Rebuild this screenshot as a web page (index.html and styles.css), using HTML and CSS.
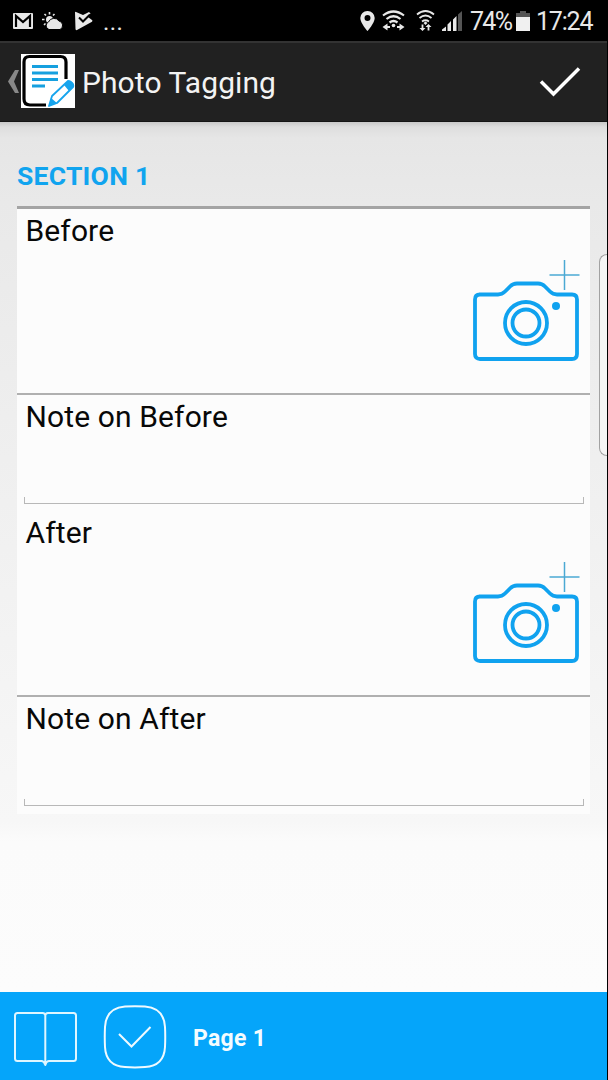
FILE: index.html
```html
<!DOCTYPE html>
<html lang="en">
<head>
<meta charset="utf-8">
<title>Photo Tagging</title>
<link rel="stylesheet" href="styles.css">
</head>
<body>
<div class="screen">
  <div class="status">
    <svg class="status-left" viewBox="0 0 110 41" width="110" height="41">
      <path fill="#e8e8e8" d="M14 13h18q1 0 1 1v14q0 1-1 1H14q-1 0-1-1V14q0-1 1-1z"/>
      <path fill="none" stroke="#000" stroke-width="2.2" d="M16 27V16l7 6 7-6v11"/>
      <g stroke="#e8e8e8" stroke-width="1.6"><path d="M49.500 12v2.500M44.500 14l1.500 1.500M54.500 14l-1.500 1.500M42 19.500h2.500M44 25l1.500-1.500"/></g>
      <circle cx="49.500" cy="19.500" r="3.500" fill="#e8e8e8"/>
      <path fill="#e8e8e8" stroke="#000" stroke-width="1" d="M49 29.500a4 4 0 0 1-.5-7.500 6 6 0 0 1 10.500-1 4.500 4.500 0 0 1 1 8.500z"/>
      <path fill="#e8e8e8" d="M75 12.500q0-1 1-.6L83 15l6-3 1.500 1.500-2.500 3.500 4 3q1 .8 0 1.700L77 30q-1.500.5-1.500-1z"/>
      <path fill="none" stroke="#000" stroke-width="2" d="M79 17.500l4 4 7-7"/>
    </svg>
    <span class="dots">...</span>
    <svg class="status-right" viewBox="358 0 106 41" width="106" height="41">
      <path fill="#e8e8e8" fill-rule="evenodd" d="M367.500 11a7 7 0 0 1 7.200 7c0 5-7.200 13-7.200 13s-7.200-8-7.200-13a7 7 0 0 1 7.200-7zm0 4a3 3 0 1 0 0 6 3 3 0 0 0 0-6z"/>
      <g fill="none" stroke="#e8e8e8" stroke-width="2.200">
        <path d="M383 15.500q10.500-8 21 0M386.500 19q7-5.500 14 0M389.500 22.500q4-3 8 0"/>
        <path d="M384 27h6M397 27h6"/>
        <path d="M417 14.500q8.500-7 17 0M419.500 18q6-5 12 0M422 21.500q3.500-2.500 7 0" stroke-width="1.800"/>
        <path d="M422.500 24.500v5M428.500 25.500v5" stroke-width="1.800"/>
      </g>
      <g fill="#e8e8e8"><path d="M387.500 23.500v7l-5-3.500zM399.500 23.500v7l5-3.500z" transform="translate(0 0)"/><circle cx="393.500" cy="25.500" r="1.800"/><path d="M419.500 28h6l-3 3zM425.500 27h6l-3-3zM423.500 23l2-1.500 2 1.500-2 2z"/>
      <path d="M442 31v-1.500l4-3V31zM447.500 31v-6.500l3.500-3.500v10zM453 31V19.500l3.500-3.500v15z"/></g>
      <path fill="#555" d="M458 31V14.500l4-3.500v20z"/>
    </svg>
    <span class="battery-text">74%</span>
    <svg class="battery" viewBox="0 0 14 22" width="14" height="22"><path fill="#555" d="M0 2h4V0h6v2h4v5H0z"/><path fill="#f0f0f0" d="M0 6h14v14H0z"/></svg>
    <span class="clock">17:24</span>
  </div>
  <header class="bar">
    <svg class="back" viewBox="0 0 14 26" width="14" height="26"><path fill="#888" d="M8 1h4L7 12.500 12 24H8L1 12.500z"/></svg>
    <svg class="logo" viewBox="0 0 54 54" width="54" height="54">
      <path fill="#fff" d="M0 0h54v54H0z"/>
      <path fill="none" stroke="#000" stroke-width="3.200" d="M45 25V8q0-5.500-5.500-5.500H8.500Q3 2.500 3 8v37q0 6 6 6h16"/>
      <path fill="none" stroke="#16a0df" stroke-width="3.200" d="M11 12.500h26M11 19h26M11 25.500h26M11 32h13"/>
      <path fill="#fff" stroke="#16a4ed" stroke-width="1.800" stroke-linejoin="round" d="M31 42L47 27q2 0 4 2t1 4L36 49l-8 3z"/>
      <path fill="#16a4ed" d="M43 31l4-4q2-1 4 1t1.500 4.500L48 37zM30 44l6 5-8 3z"/>
    </svg>
    <h1 class="title">Photo Tagging</h1>
    <svg class="done" viewBox="0 0 44 34" width="44" height="34"><path fill="none" stroke="#fff" stroke-width="3.500" d="M3 16.500L15.500 29 41 3.500"/></svg>
  </header>
  <main class="content">
    <h2 class="section">SECTION 1</h2>
    <div class="card">
      <div class="photo">
        <span class="label">Before</span>
        <svg class="camera" viewBox="0 0 108 104" width="108" height="104">
          <g fill="none" stroke="#10a2ef" stroke-width="3.800">
            <path d="M7 37.500h19Q30 37.500 33 34.500L38 29.500Q41 26.500 45 26.500H66Q70 26.500 73 29.500L78 34.500Q81 37.500 85 37.500H100Q105 37.500 105 42.500V97Q105 102 100 102H8Q3 102 3 97V42.500Q3 37.500 8 37.500"/>
            <circle cx="54" cy="66" r="21"/><circle cx="54" cy="66" r="13.500"/>
          </g>
          <circle cx="84" cy="49" r="4" fill="#10a2ef"/>
          <path fill="none" stroke="#4ba9d3" stroke-width="1.500" d="M92.500 3v30M77.500 18h30"/>
        </svg>
      </div>
      <div class="note"><span class="label">Note on Before</span><div class="field"></div></div>
      <div class="photo second">
        <span class="label">After</span>
        <svg class="camera" viewBox="0 0 108 104" width="108" height="104">
          <g fill="none" stroke="#10a2ef" stroke-width="3.800">
            <path d="M7 37.500h19Q30 37.500 33 34.500L38 29.500Q41 26.500 45 26.500H66Q70 26.500 73 29.500L78 34.500Q81 37.500 85 37.500H100Q105 37.500 105 42.500V97Q105 102 100 102H8Q3 102 3 97V42.500Q3 37.500 8 37.500"/>
            <circle cx="54" cy="66" r="21"/><circle cx="54" cy="66" r="13.500"/>
          </g>
          <circle cx="84" cy="49" r="4" fill="#10a2ef"/>
          <path fill="none" stroke="#4ba9d3" stroke-width="1.500" d="M92.500 3v30M77.500 18h30"/>
        </svg>
      </div>
      <div class="note"><span class="label">Note on After</span><div class="field"></div></div>
    </div>
    <div class="edge-handle"></div>
  </main>
  <footer class="footer">
    <svg class="book" viewBox="0 0 64 56" width="64" height="56"><path fill="none" stroke="#dff6ff" stroke-width="2" stroke-linejoin="round" d="M32.300 4.500Q32.300 2 29.500 2H4.500Q2 2 2 4.500V47.500Q2 50 4.500 50H28.500Q31 50 32.300 54 33.500 50 36 50H60.500Q63 50 63 47.500V4.500Q63 2 60.500 2H35Q32.300 2 32.300 4.500V53"/></svg>
    <svg class="page-check" viewBox="0 0 64 64" width="64" height="64"><path fill="none" stroke="#effaff" stroke-width="2" d="M22 1.500Q32 .8 42 1.500 61 3 62 22 62.500 32 62 42 61 61 42 62 32 62.800 22 62 3 61 2 42 1.500 32 2 22 3 3 22 1.500zM16 29L28.500 41.500 47.500 22"/></svg>
    <span class="page">Page 1</span>
  </footer>
</div>
</body>
</html>
```
FILE: styles.css
```css
* { box-sizing: border-box; }
body { margin: 0; background: #000; font-family: Roboto, "Liberation Sans", sans-serif; }
svg { display: block; flex: none; }
.screen { width: 607px; height: 1080px; display: flex; flex-direction: column; overflow: hidden; }
.status { height: 41px; background: #000; display: flex; color: #e8e8e8; line-height: 44px; white-space: nowrap; }
.dots { width: 248px; font-size: 24px; margin-left: -7px; letter-spacing: 0.4px; margin-right: 7px; }
.battery-text { width: 46px; margin-left: 6px; font-size: 25px; letter-spacing: -1.7px; }
.battery { margin-top: 11px; }
.clock { margin-left: 6px; font-size: 25px; letter-spacing: -1.2px; }
.bar { height: 81px; background: #212121; border-top: 2px solid #333; border-bottom: 1px solid #151515; display: flex; align-items: center; padding: 0 25px 0 7px; }
.logo { margin-top: -2px; }
.title { margin: 2px 0 0 7px; flex: 1; color: #f3f3f3; font-size: 30px; font-weight: 400; line-height: 40px; letter-spacing: 0.08px; white-space: nowrap; }
.content { position: relative; height: 870px; padding: 34px 17px 0; background: linear-gradient(#c8c8c8 0, #dedede 5px, #e6e6e6 16px, #e9e9e9 80px, #f0f0f0 380px, #f7f7f7 700px, #fbfbfb 720px, #fcfcfc 100%); }
.section { margin: 0; height: 50px; color: #10a4ef; font-size: 26.5px; line-height: 39px; font-weight: 700; letter-spacing: 0.25px; }
.card { height: 608px; border-top: 3px solid #a4a4a4; background: #fcfcfc; }
.photo { height: 186px; border-bottom: 2px solid #b0b0b0; padding: 4px 10.5px 0 8.5px; display: flex; justify-content: space-between; }
.camera { margin-top: 44px; }
.label { display: block; font-size: 30px; line-height: 36px; color: #080808; letter-spacing: 0.12px; white-space: nowrap; }
.note { height: 109px; padding: 4px 6.5px 0 7px; }
.note .label { margin-left: 1.5px; }
.field { height: 7px; margin-top: 62px; border: 1px solid #b8b8b8; border-top: 0; }
.second { height: 193px; padding-top: 11px; }
.edge-handle { position: absolute; top: 132px; right: 0; width: 8px; height: 202px; border: 1px solid #a2a2a2; border-right: 0; border-radius: 8px 0 0 8px; background: #f5f5f5; }
.footer { height: 88px; background: #05a5fa; display: flex; align-items: center; padding: 2px 13px; color: #f4fcff; }
.book { margin-top: 6px; }
.page-check { margin-left: 26px; margin-top: 2px; }
.page { margin-left: 26px; margin-top: 6px; font-size: 23px; line-height: 28px; font-weight: 700; letter-spacing: 0.3px; }
```
